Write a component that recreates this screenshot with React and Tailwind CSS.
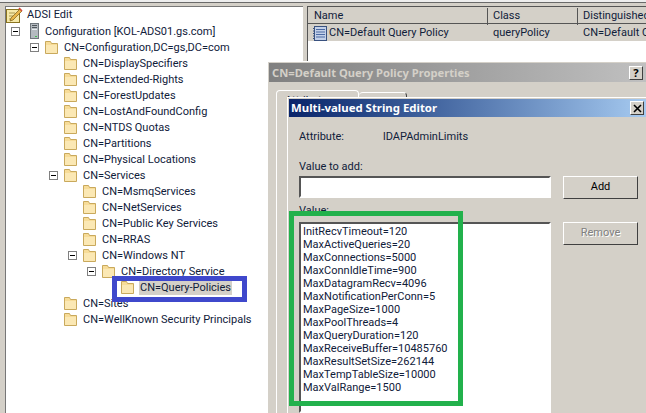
import React from "react";

const treeRows = [
  { label: "Configuration [KOL-ADS01.gs.com]", pad: "pl-[5px]", open: true, icon: "server" },
  { label: "CN=Configuration,DC=gs,DC=com", pad: "pl-[24px]", open: true },
  { label: "CN=DisplaySpecifiers", pad: "pl-[43px]" },
  { label: "CN=Extended-Rights", pad: "pl-[43px]" },
  { label: "CN=ForestUpdates", pad: "pl-[43px]" },
  { label: "CN=LostAndFoundConfig", pad: "pl-[43px]" },
  { label: "CN=NTDS Quotas", pad: "pl-[43px]" },
  { label: "CN=Partitions", pad: "pl-[43px]" },
  { label: "CN=Physical Locations", pad: "pl-[43px]" },
  { label: "CN=Services", pad: "pl-[43px]", open: true },
  { label: "CN=MsmqServices", pad: "pl-[62px]" },
  { label: "CN=NetServices", pad: "pl-[62px]" },
  { label: "CN=Public Key Services", pad: "pl-[62px]" },
  { label: "CN=RRAS", pad: "pl-[62px]" },
  { label: "CN=Windows NT", pad: "pl-[62px]", open: true },
  { label: "CN=Directory Service", pad: "pl-[81px]", open: true },
  { label: "CN=Query-Policies", pad: "pl-[100px]", selected: true },
  { label: "CN=Sites", pad: "pl-[43px]" },
  { label: "CN=WellKnown Security Principals", pad: "pl-[43px]" },
];

const limits = [
  "InitRecvTimeout=120",
  "MaxActiveQueries=20",
  "MaxConnections=5000",
  "MaxConnIdleTime=900",
  "MaxDatagramRecv=4096",
  "MaxNotificationPerConn=5",
  "MaxPageSize=1000",
  "MaxPoolThreads=4",
  "MaxQueryDuration=120",
  "MaxReceiveBuffer=10485760",
  "MaxResultSetSize=262144",
  "MaxTempTableSize=10000",
  "MaxValRange=1500",
];

const FolderIcon = () => (
  <svg width="15" height="14" viewBox="0 0 15 14" className="shrink-0">
    <path d="M1.5 13.5V1.5h5l1 2h6v10z" fill="#f7dc98" stroke="#c9a95c" />
    <path d="M2 5h11v8H2z" fill="#fbe8b4" />
  </svg>
);

const ServerIcon = () => (
  <svg width="9" height="16" viewBox="0 0 9 16" className="shrink-0">
    <rect x="0.5" y="0.5" width="8" height="15" fill="#b4bac0" stroke="#6f767c" />
    <rect x="2" y="2" width="5" height="1" fill="#4f565c" />
    <rect x="2" y="4" width="5" height="1" fill="#4f565c" />
    <rect x="2" y="6" width="5" height="1" fill="#e8ecef" />
    <rect x="5" y="13" width="2" height="1" fill="#3fbf4f" />
  </svg>
);

const EditIcon = () => (
  <svg width="17" height="16" viewBox="0 0 17 16" className="shrink-0">
    <rect x="0.5" y="2.5" width="13" height="13" fill="#f6e9a8" stroke="#8a7420" />
    <path d="M3 6h6M3 9h4M3 12h5" stroke="#a8964c" />
    <path d="M5 11l9-9 2 2-9 9-3 1z" fill="#e8b64a" stroke="#7a5a18" strokeWidth="0.7" />
    <path d="M13 1l3 3" stroke="#d24a3c" strokeWidth="1.6" />
  </svg>
);

const NotebookIcon = () => (
  <svg width="14" height="15" viewBox="0 0 14 15" className="shrink-0">
    <rect x="1.5" y="0.5" width="12" height="14" fill="#c3d0e8" stroke="#39517f" />
    <path d="M3 3.5h9M3 6h9M3 8.5h9M3 11h9" stroke="#4c6aa3" />
    <path d="M0 2.5h2M0 5h2M0 7.5h2M0 10h2M0 12.5h2" stroke="#39517f" />
  </svg>
);

const Expander = () => (
  <span className="flex h-[9px] w-[9px] shrink-0 items-center justify-center border border-[#808080] bg-white">
    <span className="h-px w-[5px] bg-black" />
  </span>
);

const TreeRow = ({ row }) => {
  const isServer = row.icon === "server";
  return (
    <div className={`flex h-4 items-center ${row.pad}`}>
      <span className={`flex shrink-0 items-center ${isServer ? "w-[19px]" : "w-[14px]"}`}>
        {row.open && <Expander />}
      </span>
      <span className={`flex shrink-0 items-center ${isServer ? "w-[14px]" : "w-[15px]"}`}>
        {isServer ? <ServerIcon /> : <FolderIcon />}
      </span>
      <span
        className={`whitespace-nowrap px-px leading-[15px] ${isServer ? "" : "ml-[4px]"} ${
          row.selected ? "bg-[#d4d0c8]" : ""
        }`}
      >
        {row.label}
      </span>
    </div>
  );
};

const raised = "border border-t-white border-l-white border-r-[#404040] border-b-[#404040] bg-[#d4d0c8]";
const sunken = "border-2 border-t-[#555555] border-l-[#555555] border-r-white border-b-white bg-white";

const App = () => {
  return (
    <div className="relative h-[413px] w-[646px] overflow-hidden bg-[#d4d0c8] font-['Roboto','Liberation_Sans',sans-serif] text-[11px] text-[#10203a]">
      <div className="h-[3px] border-b border-[#6a6a6a] bg-[#eeeeee]" />
      <div className="flex h-[410px] gap-[4px] pl-[5px] pt-[3px]">
        <div className="w-[298px] border-l border-t border-[#777777] bg-white">
          <div className="flex h-4 items-center pl-0">
            <EditIcon />
            <span className="ml-[4px]">ADSI Edit</span>
          </div>
          {treeRows.map((row) => (
            <TreeRow key={row.label} row={row} />
          ))}
        </div>

        <div className="flex-1 border-l border-t border-[#555555] bg-white">
          <div className="grid h-[17px] grid-cols-[180px_90px_1fr] items-stretch border-b border-[#555555] bg-[#d4d0c8] pt-px">
            <div className="flex items-center border-r border-[#555555] pl-[6px]">Name</div>
            <div className="flex items-center border-r border-[#555555] pl-[5px]">Class</div>
            <div className="flex items-center overflow-hidden whitespace-nowrap pl-[5px]">Distinguished Name</div>
          </div>
          <div className="grid h-[17px] grid-cols-[180px_90px_1fr] items-center bg-[#d4d0c8] pt-px">
            <div className="flex items-center gap-[2px] pl-[5px]">
              <NotebookIcon />
              CN=Default Query Policy
            </div>
            <div className="pl-[5px]">queryPolicy</div>
            <div className="overflow-hidden whitespace-nowrap pl-[5px]">CN=Default Query Policy</div>
          </div>
        </div>
      </div>

      {/* properties window */}
      <div className="absolute left-[267px] top-[61px] h-[352px] w-[379px] border-l border-t border-white bg-[#d4d0c8] pl-px pt-px">
        <div className="flex h-[19px] items-center justify-between bg-gradient-to-r from-[#808080] to-[#c0c0c0] pl-[3px] pr-[3px] pt-px font-['Noto_Sans','Liberation_Sans',sans-serif] text-[11.2px] font-bold text-[#d4d0c8]">
          <span>CN=Default Query Policy Properties</span>
          <span className={`flex h-[14px] w-[14px] items-center justify-center font-bold text-black ${raised}`}>?</span>
        </div>
        <div className="ml-[7px] mt-[8px] flex h-[9px] items-start">
          <div className="h-[9px] w-[83px] overflow-hidden rounded-t-sm border-l border-r border-t border-white pl-[8px] pt-[3px] leading-[13px]">
            Attribute Editor
          </div>
          <div className="mt-[2px] h-[7px] w-[48px] rounded-t-sm border-r border-t border-r-[#404040] border-t-white" />
        </div>
        <div className="ml-[7px] h-full border-l border-white" />
      </div>

      {/* string editor dialog */}
      <div className="absolute left-[287px] top-[97px] flex h-[316px] w-[359px] flex-col border-l border-t border-white bg-[#d4d0c8] pl-px pt-px">
        <div className="flex h-[18px] shrink-0 items-center justify-between bg-gradient-to-r from-[#0a246a] to-[#a6caf0] pl-[2px] pr-[2px] font-['Noto_Sans','Liberation_Sans',sans-serif] text-[11.4px] font-bold text-white">
          <span>Multi-valued String Editor</span>
          <span className={`flex h-[14px] w-[14px] items-center justify-center text-black ${raised}`}>
            <svg width="9" height="9" viewBox="0 0 9 9">
              <path d="M1 1l7 7M8 1l-7 7" stroke="#000" strokeWidth="1.6" />
            </svg>
          </span>
        </div>
        <div className="flex min-h-0 flex-1 flex-col pl-[10px] pt-[13px]">
          <div className="flex h-[14px] items-center">
            <span className="w-[84px]">Attribute:</span>
            <span>lDAPAdminLimits</span>
          </div>
          <div className="mt-[16px] h-[13px] leading-[13px]">Value to add:</div>
          <div className="mt-[3px] grid grid-cols-[252px_75px] gap-x-[12px]">
            <div className={`h-[22px] ${sunken}`} />
            <div className={`flex h-[23px] items-center justify-center text-black ${raised}`}>Add</div>
          </div>
          <div className="mt-[5px] h-[18px] leading-[13px]">Value:</div>
          <div className="grid min-h-0 flex-1 grid-cols-[252px_75px] gap-x-[12px]">
            <div className={`pl-[2px] pt-[1px] ${sunken}`}>
              {limits.map((line) => (
                <div key={line} className="h-[13px] whitespace-nowrap leading-[13px]">
                  {line}
                </div>
              ))}
            </div>
            <div className={`flex h-[23px] items-center justify-center text-[#808080] [text-shadow:1px_1px_0_#fff] ${raised}`}>
              Remove
            </div>
          </div>
        </div>
      </div>

      {/* annotations drawn on the screenshot */}
      <div className="absolute left-[112px] top-[276px] h-[26px] w-[135px] border-[5px] border-[#3f48cc]" />
      <div className="absolute left-[289px] top-[211px] h-[195px] w-[174px] border-[5px] border-[#22b14c]" />
    </div>
  );
};

export default App;
